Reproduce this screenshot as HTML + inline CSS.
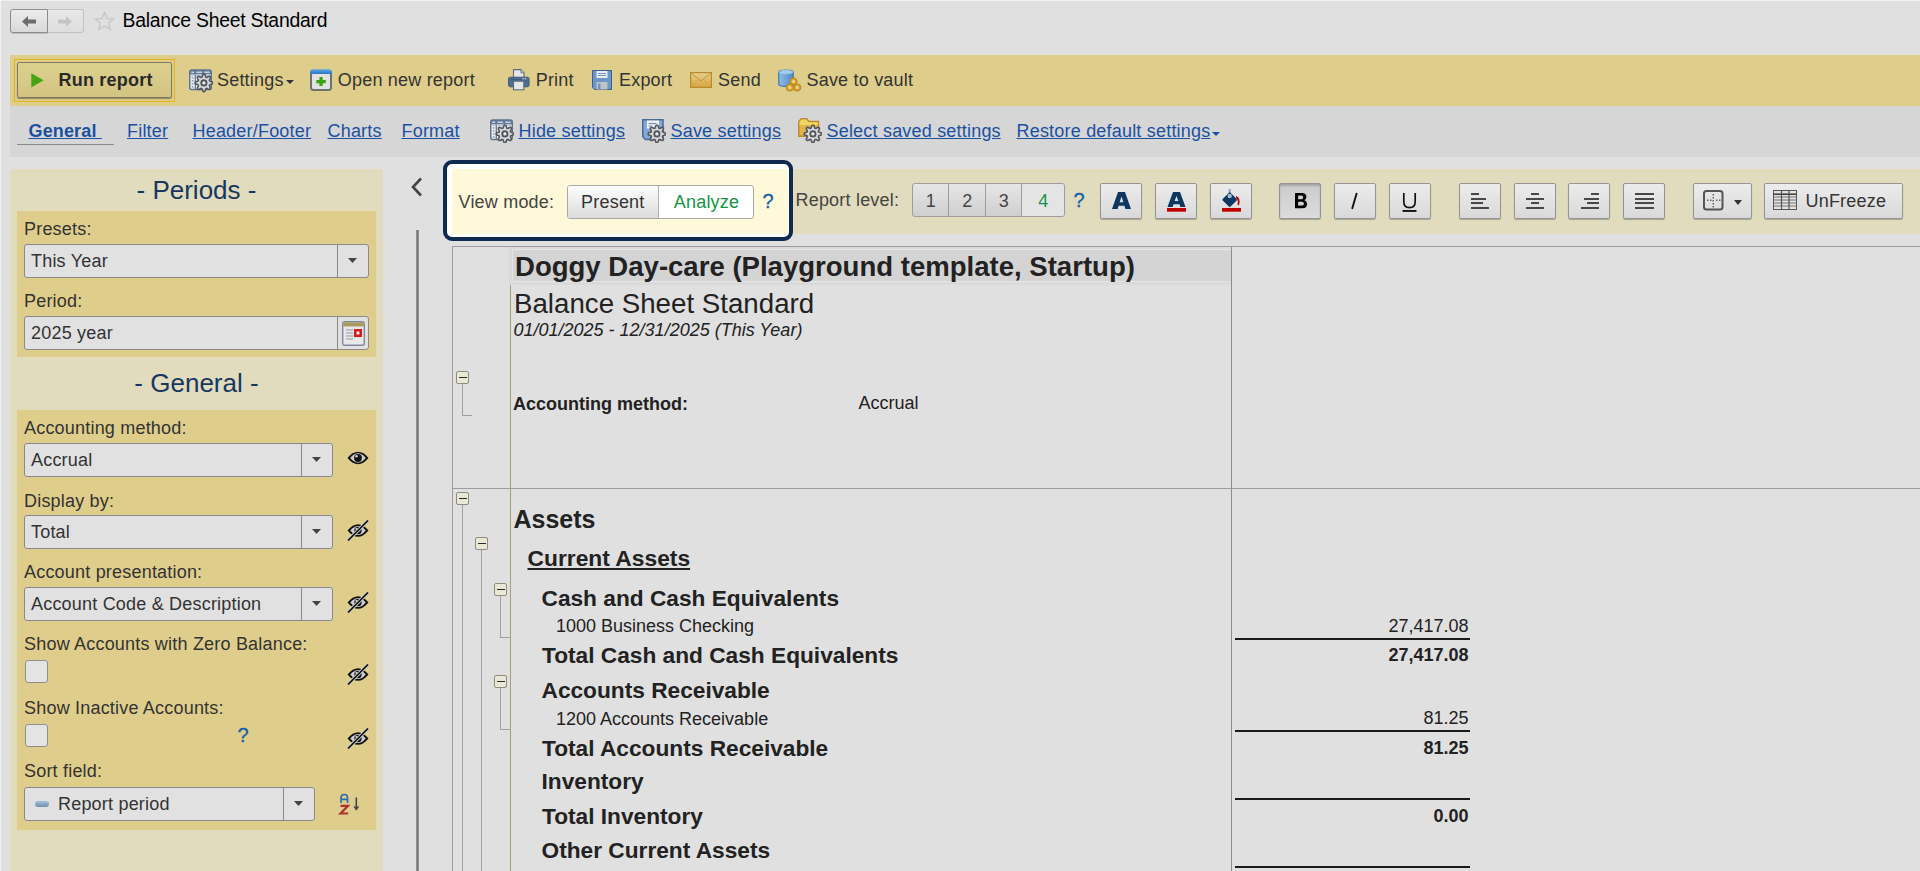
<!DOCTYPE html>
<html><head><meta charset="utf-8"><title>Balance Sheet Standard</title>
<style>
html,body{margin:0;padding:0;width:1920px;height:871px;overflow:hidden;background:#e0e0e0;font-family:"Liberation Sans",sans-serif;position:relative}
.t{position:absolute;white-space:nowrap}
.r{position:absolute}
</style></head><body>
<div class="r" style="left:0px;top:0px;width:1920px;height:1px;background:#f2f2f2"></div>
<div class="r" style="left:0px;top:0px;width:1px;height:871px;background:#f2f2f2"></div>
<div class="r" style="left:10px;top:9px;width:38px;height:24px;border:1px solid #8c8c8c;border-radius:3px 0 0 3px;background:linear-gradient(#ececec,#d9d9d9);box-sizing:border-box;box-shadow:0 1px 0 #bdbdbd"></div>
<div class="r" style="left:48px;top:9px;width:36px;height:24px;border:1px solid #c2c2c2;border-left:none;border-radius:0 3px 3px 0;background:linear-gradient(#e8e8e8,#dedede);box-sizing:border-box"></div>
<svg class="r" style="left:22px;top:16px" width="14" height="11" viewBox="0 0 14 11"><path d="M0 5.5 L6 0 V3.6 H14 V7.4 H6 V11 Z" fill="#6b6b6b"/></svg>
<svg class="r" style="left:58px;top:16px" width="14" height="11" viewBox="0 0 14 11"><path d="M14 5.5 L8 0 V3.6 H0 V7.4 H8 V11 Z" fill="#c4c4c4"/></svg>
<svg class="r" style="left:94px;top:11px" width="21" height="20" viewBox="0 0 21 20"><path d="M10.5 1.5 L13.2 7.6 L19.6 8 L14.7 12.2 L16.3 18.5 L10.5 15 L4.7 18.5 L6.3 12.2 L1.4 8 L7.8 7.6 Z" fill="none" stroke="#c6c6c6" stroke-width="1.3"/></svg>
<div class="t" style="left:122.5px;top:10.98px;font-size:19.4px;line-height:19.4px;color:#000;font-weight:400;font-style:normal;letter-spacing:-0.25px;">Balance Sheet Standard</div>
<div class="r" style="left:10px;top:55px;width:1910px;height:51px;background:#dfce8b"></div>
<div class="r" style="left:14px;top:59px;width:161px;height:43px;border:1px solid #e3b31a;box-sizing:border-box"></div>
<div class="r" style="left:17px;top:62px;width:155px;height:36px;border:1px solid #7f7b5e;border-radius:2px;box-sizing:border-box;background:linear-gradient(#ddd08f,#d3c483);box-shadow:0 1px 1px rgba(0,0,0,.35)"></div>
<svg class="r" style="left:31px;top:73px" width="13" height="15" viewBox="0 0 13 15"><path d="M0.3 0.3 L12.6 7.3 L0.3 14.5 Z" fill="#43a516"/></svg>
<div class="t" style="left:58.5px;top:71.06px;font-size:18px;line-height:18px;color:#2a2a2a;font-weight:700;font-style:normal;letter-spacing:0.22px;">Run report</div>
<svg class="r" style="left:189px;top:69px" width="24" height="24" viewBox="0 0 24 24"><rect x="0.75" y="1" width="21.5" height="19.5" rx="2" fill="#eef0f3" stroke="#5f7594" stroke-width="1.5"/><rect x="0.75" y="1" width="21.5" height="4.2" rx="1.5" fill="#5f7594"/><rect x="2.2" y="2.6" width="3.2" height="1.2" fill="#e8ecf0"/><rect x="7.4" y="2.6" width="5.8" height="1.2" fill="#e8ecf0"/><rect x="15.2" y="2.6" width="5.5" height="1.2" fill="#e8ecf0"/><line x1="6.3" y1="1" x2="6.3" y2="20.5" stroke="#5f7594" stroke-width="1.3"/><line x1="14.4" y1="5" x2="14.4" y2="20.5" stroke="#a3b1c4" stroke-width="1"/><line x1="1" y1="6.2" x2="22" y2="6.2" stroke="#a3b1c4" stroke-width="1"/><rect x="2.8" y="8.2" width="1.6" height="1.4" fill="#8090a8"/><rect x="2.8" y="11.2" width="1.6" height="1.4" fill="#8090a8"/><rect x="2.8" y="14.2" width="1.6" height="1.4" fill="#8090a8"/><rect x="2.8" y="17.2" width="1.6" height="1.4" fill="#8090a8"/><polygon points="23.60,13.90 23.58,14.47 23.04,14.97 22.15,15.34 21.26,15.60 20.67,15.86 20.53,16.23 20.36,16.59 20.60,17.19 21.05,18.01 21.41,18.90 21.44,19.64 21.05,20.05 20.64,20.44 19.90,20.41 19.01,20.05 18.19,19.60 17.59,19.36 17.23,19.53 16.86,19.67 16.60,20.26 16.34,21.15 15.97,22.04 15.47,22.58 14.90,22.60 14.33,22.58 13.83,22.04 13.46,21.15 13.20,20.26 12.94,19.67 12.57,19.53 12.21,19.36 11.61,19.60 10.79,20.05 9.90,20.41 9.16,20.44 8.75,20.05 8.36,19.64 8.39,18.90 8.75,18.01 9.20,17.19 9.44,16.59 9.27,16.23 9.13,15.86 8.54,15.60 7.65,15.34 6.76,14.97 6.22,14.47 6.20,13.90 6.22,13.33 6.76,12.83 7.65,12.46 8.54,12.20 9.13,11.94 9.27,11.57 9.44,11.21 9.20,10.61 8.75,9.79 8.39,8.90 8.36,8.16 8.75,7.75 9.16,7.36 9.90,7.39 10.79,7.75 11.61,8.20 12.21,8.44 12.57,8.27 12.94,8.13 13.20,7.54 13.46,6.65 13.83,5.76 14.33,5.22 14.90,5.20 15.47,5.22 15.97,5.76 16.34,6.65 16.60,7.54 16.86,8.13 17.23,8.27 17.59,8.44 18.19,8.20 19.01,7.75 19.90,7.39 20.64,7.36 21.05,7.75 21.44,8.16 21.41,8.90 21.05,9.79 20.60,10.61 20.36,11.21 20.53,11.57 20.67,11.94 21.26,12.20 22.15,12.46 23.04,12.83 23.58,13.33" fill="#dadada" stroke="#50555e" stroke-width="1.6" stroke-linejoin="round"/><circle cx="14.9" cy="13.9" r="2.61" fill="#eee" stroke="#50555e" stroke-width="1.9"/></svg>
<div class="t" style="left:217px;top:70.56px;font-size:18px;line-height:18px;color:#333;font-weight:400;font-style:normal;letter-spacing:0.2px;">Settings</div>
<svg class="r" style="left:286px;top:80px" width="8" height="4" viewBox="0 0 8 4"><path d="M0 0 H8 L4 4 Z" fill="#333"/></svg>
<svg class="r" style="left:310px;top:69px" width="22" height="22" viewBox="0 0 22 22"><defs><linearGradient id="onr" x1="0" y1="0" x2="0" y2="1"><stop offset="0" stop-color="#62a6e2"/><stop offset="1" stop-color="#2a76c6"/></linearGradient></defs><rect x="1" y="3" width="20" height="18" rx="2.5" fill="#e2e2e2" stroke="#6c736c" stroke-width="2"/><path d="M0 3.2 Q0 0.2 3.2 0.2 H18.8 Q22 0.2 22 3.2 V5 H0 Z" fill="url(#onr)"/><path d="M9.4 8.1 H12.7 V11 H15.8 V14.2 H12.7 V17 H9.4 V14.2 H6.3 V11 H9.4 Z" fill="#3aa214"/></svg>
<div class="t" style="left:337.8px;top:70.56px;font-size:18px;line-height:18px;color:#333;font-weight:400;font-style:normal;letter-spacing:0.2px;">Open new report</div>
<svg class="r" style="left:507px;top:69px" width="23" height="22" viewBox="0 0 23 22"><path d="M6.5 0.6 H13.8 L17 3.8 V9 H6.5 Z" fill="#e6e6e6" stroke="#5c6b7c" stroke-width="1.1"/><path d="M13.8 0.6 V3.8 H17" fill="#d0d0d0" stroke="#5c6b7c" stroke-width="0.8"/><rect x="1.5" y="8.2" width="20.6" height="9.6" rx="1.8" fill="#4d6e94" stroke="#3a5678" stroke-width="0.9"/><line x1="3.5" y1="10.6" x2="19.5" y2="10.6" stroke="#3a5678" stroke-width="0.8"/><rect x="15.5" y="9.2" width="1.3" height="1.2" fill="#e8e8e8"/><rect x="17.8" y="9.2" width="1.3" height="1.2" fill="#e8e8e8"/><rect x="6.5" y="12.2" width="10.3" height="8.6" fill="#e6e6e6" stroke="#5c6b7c" stroke-width="1.1"/></svg>
<div class="t" style="left:535.7px;top:70.56px;font-size:18px;line-height:18px;color:#333;font-weight:400;font-style:normal;letter-spacing:0.2px;">Print</div>
<svg class="r" style="left:592px;top:70px" width="20" height="20" viewBox="0 0 20 20"><path d="M0.5 0.5 H19.5 V19.5 H2.5 L0.5 17.5 Z" fill="#6d95c7" stroke="#3f5f8a" stroke-width="1"/><rect x="4.5" y="1" width="11" height="7" fill="#ececec"/><line x1="6" y1="3.5" x2="14" y2="3.5" stroke="#6d95c7"/><line x1="6" y1="5.5" x2="14" y2="5.5" stroke="#6d95c7"/><rect x="4.5" y="12" width="11" height="7.5" fill="#c0c4c0"/><rect x="6" y="13.5" width="2.5" height="6" fill="#6d95c7"/></svg>
<div class="t" style="left:619px;top:70.56px;font-size:18px;line-height:18px;color:#333;font-weight:400;font-style:normal;letter-spacing:0.2px;">Export</div>
<svg class="r" style="left:690px;top:72px" width="22" height="16" viewBox="0 0 22 16"><defs><linearGradient id="env" x1="0" y1="0" x2="0" y2="1"><stop offset="0" stop-color="#e8cf90"/><stop offset="1" stop-color="#d9a53c"/></linearGradient></defs><rect x="0.6" y="0.6" width="20.8" height="14.8" fill="url(#env)" stroke="#b88a2e" stroke-width="1.2"/><path d="M1 1 L11 9 L21 1" fill="none" stroke="#c19138" stroke-width="1"/><path d="M1 15 L8 8 M21 15 L14 8" stroke="#c9a050" stroke-width="0.8"/></svg>
<div class="t" style="left:718px;top:70.56px;font-size:18px;line-height:18px;color:#333;font-weight:400;font-style:normal;letter-spacing:0.2px;">Send</div>
<svg class="r" style="left:778px;top:69px" width="24" height="23" viewBox="0 0 24 23"><defs><linearGradient id="cyl" x1="0" y1="0" x2="1" y2="0"><stop offset="0" stop-color="#8fbde6"/><stop offset="1" stop-color="#4f8cc8"/></linearGradient></defs><path d="M0.8 3 C0.8 0.5 15.2 0.5 15.2 3 V15.5 C15.2 18 0.8 18 0.8 15.5 Z" fill="url(#cyl)" stroke="#3f78a8" stroke-width="1.2"/><ellipse cx="8" cy="3" rx="7.2" ry="2.2" fill="#9fcbee"/><g fill="#d9a82a" stroke="#b7831c" stroke-width="1"><circle cx="15.5" cy="12.5" r="3.6"/><circle cx="11.8" cy="18.5" r="3.6"/><circle cx="19.2" cy="18.5" r="3.6"/></g><g fill="#f3dfa5"><rect x="14.3" y="11.3" width="2.4" height="2.4"/><rect x="10.6" y="17.3" width="2.4" height="2.4"/><rect x="18" y="17.3" width="2.4" height="2.4"/></g></svg>
<div class="t" style="left:806.5px;top:70.56px;font-size:18px;line-height:18px;color:#333;font-weight:400;font-style:normal;letter-spacing:0.2px;">Save to vault</div>
<div class="r" style="left:10px;top:106px;width:1910px;height:51px;background:#d6d6d6"></div>
<div class="t" style="left:28.5px;top:122.16px;font-size:18px;line-height:18px;color:#1a50a2;font-weight:700;font-style:normal;letter-spacing:0.15px;text-decoration:underline">General&nbsp;</div>
<div class="r" style="left:17px;top:143.6px;width:97px;height:1.5px;background:#8a8a8a"></div>
<div class="t" style="left:127px;top:122.16px;font-size:18px;line-height:18px;color:#1a50a2;font-weight:400;font-style:normal;letter-spacing:0.2px;text-decoration:underline">Filter</div>
<div class="t" style="left:192.5px;top:122.16px;font-size:18px;line-height:18px;color:#1a50a2;font-weight:400;font-style:normal;letter-spacing:0.2px;text-decoration:underline">Header/Footer</div>
<div class="t" style="left:327.5px;top:122.16px;font-size:18px;line-height:18px;color:#1a50a2;font-weight:400;font-style:normal;letter-spacing:0.2px;text-decoration:underline">Charts</div>
<div class="t" style="left:401.5px;top:122.16px;font-size:18px;line-height:18px;color:#1a50a2;font-weight:400;font-style:normal;letter-spacing:0.2px;text-decoration:underline">Format</div>
<svg class="r" style="left:490px;top:119px" width="24" height="24" viewBox="0 0 24 24"><rect x="0.75" y="1" width="21.5" height="19.5" rx="2" fill="#eef0f3" stroke="#5f7594" stroke-width="1.5"/><rect x="0.75" y="1" width="21.5" height="4.2" rx="1.5" fill="#5f7594"/><rect x="2.2" y="2.6" width="3.2" height="1.2" fill="#e8ecf0"/><rect x="7.4" y="2.6" width="5.8" height="1.2" fill="#e8ecf0"/><rect x="15.2" y="2.6" width="5.5" height="1.2" fill="#e8ecf0"/><line x1="6.3" y1="1" x2="6.3" y2="20.5" stroke="#5f7594" stroke-width="1.3"/><line x1="14.4" y1="5" x2="14.4" y2="20.5" stroke="#a3b1c4" stroke-width="1"/><line x1="1" y1="6.2" x2="22" y2="6.2" stroke="#a3b1c4" stroke-width="1"/><rect x="2.8" y="8.2" width="1.6" height="1.4" fill="#8090a8"/><rect x="2.8" y="11.2" width="1.6" height="1.4" fill="#8090a8"/><rect x="2.8" y="14.2" width="1.6" height="1.4" fill="#8090a8"/><rect x="2.8" y="17.2" width="1.6" height="1.4" fill="#8090a8"/><polygon points="23.60,14.90 23.58,15.47 23.04,15.97 22.15,16.34 21.26,16.60 20.67,16.86 20.53,17.23 20.36,17.59 20.60,18.19 21.05,19.01 21.41,19.90 21.44,20.64 21.05,21.05 20.64,21.44 19.90,21.41 19.01,21.05 18.19,20.60 17.59,20.36 17.23,20.53 16.86,20.67 16.60,21.26 16.34,22.15 15.97,23.04 15.47,23.58 14.90,23.60 14.33,23.58 13.83,23.04 13.46,22.15 13.20,21.26 12.94,20.67 12.57,20.53 12.21,20.36 11.61,20.60 10.79,21.05 9.90,21.41 9.16,21.44 8.75,21.05 8.36,20.64 8.39,19.90 8.75,19.01 9.20,18.19 9.44,17.59 9.27,17.23 9.13,16.86 8.54,16.60 7.65,16.34 6.76,15.97 6.22,15.47 6.20,14.90 6.22,14.33 6.76,13.83 7.65,13.46 8.54,13.20 9.13,12.94 9.27,12.57 9.44,12.21 9.20,11.61 8.75,10.79 8.39,9.90 8.36,9.16 8.75,8.75 9.16,8.36 9.90,8.39 10.79,8.75 11.61,9.20 12.21,9.44 12.57,9.27 12.94,9.13 13.20,8.54 13.46,7.65 13.83,6.76 14.33,6.22 14.90,6.20 15.47,6.22 15.97,6.76 16.34,7.65 16.60,8.54 16.86,9.13 17.23,9.27 17.59,9.44 18.19,9.20 19.01,8.75 19.90,8.39 20.64,8.36 21.05,8.75 21.44,9.16 21.41,9.90 21.05,10.79 20.60,11.61 20.36,12.21 20.53,12.57 20.67,12.94 21.26,13.20 22.15,13.46 23.04,13.83 23.58,14.33" fill="#dadada" stroke="#50555e" stroke-width="1.6" stroke-linejoin="round"/><circle cx="14.9" cy="14.9" r="2.61" fill="#eee" stroke="#50555e" stroke-width="1.9"/></svg>
<div class="t" style="left:518.5px;top:122.16px;font-size:18px;line-height:18px;color:#1a50a2;font-weight:400;font-style:normal;letter-spacing:0.2px;text-decoration:underline">Hide settings</div>
<svg class="r" style="left:642px;top:119px" width="24" height="24" viewBox="0 0 24 24"><path d="M0.75 0.75 H21 V20.5 H3.5 L0.75 17.8 Z" fill="#85a8d6" stroke="#4a6a95" stroke-width="1.5"/><rect x="5" y="1.5" width="12" height="8" fill="#f2f2f2"/><line x1="6.5" y1="4.5" x2="14.5" y2="4.5" stroke="#6f8fbf" stroke-width="1.2"/><line x1="6.5" y1="7" x2="10" y2="7" stroke="#6f8fbf" stroke-width="1"/><polygon points="23.60,14.90 23.58,15.47 23.04,15.97 22.15,16.34 21.26,16.60 20.67,16.86 20.53,17.23 20.36,17.59 20.60,18.19 21.05,19.01 21.41,19.90 21.44,20.64 21.05,21.05 20.64,21.44 19.90,21.41 19.01,21.05 18.19,20.60 17.59,20.36 17.23,20.53 16.86,20.67 16.60,21.26 16.34,22.15 15.97,23.04 15.47,23.58 14.90,23.60 14.33,23.58 13.83,23.04 13.46,22.15 13.20,21.26 12.94,20.67 12.57,20.53 12.21,20.36 11.61,20.60 10.79,21.05 9.90,21.41 9.16,21.44 8.75,21.05 8.36,20.64 8.39,19.90 8.75,19.01 9.20,18.19 9.44,17.59 9.27,17.23 9.13,16.86 8.54,16.60 7.65,16.34 6.76,15.97 6.22,15.47 6.20,14.90 6.22,14.33 6.76,13.83 7.65,13.46 8.54,13.20 9.13,12.94 9.27,12.57 9.44,12.21 9.20,11.61 8.75,10.79 8.39,9.90 8.36,9.16 8.75,8.75 9.16,8.36 9.90,8.39 10.79,8.75 11.61,9.20 12.21,9.44 12.57,9.27 12.94,9.13 13.20,8.54 13.46,7.65 13.83,6.76 14.33,6.22 14.90,6.20 15.47,6.22 15.97,6.76 16.34,7.65 16.60,8.54 16.86,9.13 17.23,9.27 17.59,9.44 18.19,9.20 19.01,8.75 19.90,8.39 20.64,8.36 21.05,8.75 21.44,9.16 21.41,9.90 21.05,10.79 20.60,11.61 20.36,12.21 20.53,12.57 20.67,12.94 21.26,13.20 22.15,13.46 23.04,13.83 23.58,14.33" fill="#dadada" stroke="#50555e" stroke-width="1.6" stroke-linejoin="round"/><circle cx="14.9" cy="14.9" r="2.61" fill="#eee" stroke="#50555e" stroke-width="1.9"/></svg>
<div class="t" style="left:670.5px;top:122.16px;font-size:18px;line-height:18px;color:#1a50a2;font-weight:400;font-style:normal;letter-spacing:0.2px;text-decoration:underline">Save settings</div>
<svg class="r" style="left:798px;top:118px" width="24" height="25" viewBox="0 0 24 25"><path d="M0.75 3.5 L3.2 0.75 H8.5 L11 3.5 H20.5 V18.2 H0.75 Z" fill="#e2b448" stroke="#c0862e" stroke-width="1.4"/><path d="M1.5 4 L3.5 1.5 H8.2 L10.5 4.2 H19.8 V7 H1.5 Z" fill="#f0d560"/><polygon points="23.60,15.90 23.58,16.47 23.04,16.97 22.15,17.34 21.26,17.60 20.67,17.86 20.53,18.23 20.36,18.59 20.60,19.19 21.05,20.01 21.41,20.90 21.44,21.64 21.05,22.05 20.64,22.44 19.90,22.41 19.01,22.05 18.19,21.60 17.59,21.36 17.23,21.53 16.86,21.67 16.60,22.26 16.34,23.15 15.97,24.04 15.47,24.58 14.90,24.60 14.33,24.58 13.83,24.04 13.46,23.15 13.20,22.26 12.94,21.67 12.57,21.53 12.21,21.36 11.61,21.60 10.79,22.05 9.90,22.41 9.16,22.44 8.75,22.05 8.36,21.64 8.39,20.90 8.75,20.01 9.20,19.19 9.44,18.59 9.27,18.23 9.13,17.86 8.54,17.60 7.65,17.34 6.76,16.97 6.22,16.47 6.20,15.90 6.22,15.33 6.76,14.83 7.65,14.46 8.54,14.20 9.13,13.94 9.27,13.57 9.44,13.21 9.20,12.61 8.75,11.79 8.39,10.90 8.36,10.16 8.75,9.75 9.16,9.36 9.90,9.39 10.79,9.75 11.61,10.20 12.21,10.44 12.57,10.27 12.94,10.13 13.20,9.54 13.46,8.65 13.83,7.76 14.33,7.22 14.90,7.20 15.47,7.22 15.97,7.76 16.34,8.65 16.60,9.54 16.86,10.13 17.23,10.27 17.59,10.44 18.19,10.20 19.01,9.75 19.90,9.39 20.64,9.36 21.05,9.75 21.44,10.16 21.41,10.90 21.05,11.79 20.60,12.61 20.36,13.21 20.53,13.57 20.67,13.94 21.26,14.20 22.15,14.46 23.04,14.83 23.58,15.33" fill="#dadada" stroke="#50555e" stroke-width="1.6" stroke-linejoin="round"/><circle cx="14.9" cy="15.9" r="2.61" fill="#eee" stroke="#50555e" stroke-width="1.9"/></svg>
<div class="t" style="left:826.5px;top:122.16px;font-size:18px;line-height:18px;color:#1a50a2;font-weight:400;font-style:normal;letter-spacing:0.2px;text-decoration:underline">Select saved settings</div>
<div class="t" style="left:1016.5px;top:122.16px;font-size:18px;line-height:18px;color:#1a50a2;font-weight:400;font-style:normal;letter-spacing:0.2px;text-decoration:underline">Restore default settings</div>
<svg class="r" style="left:1212px;top:132px" width="8" height="4" viewBox="0 0 8 4"><path d="M0 0 H8 L4 4 Z" fill="#1a50a2"/></svg>
<div class="r" style="left:10px;top:169px;width:373px;height:702px;background:#e0dcbd"></div>
<div class="t" style="left:10px;width:373px;text-align:center;top:177.49px;font-size:26px;line-height:26px;color:#17375e">- Periods -</div>
<div class="r" style="left:17px;top:211px;width:359px;height:146px;background:#dfce8b"></div>
<div class="t" style="left:24px;top:219.76px;font-size:18px;line-height:18px;color:#333;font-weight:400;font-style:normal;letter-spacing:0.2px;">Presets:</div>
<div class="r" style="left:24px;top:244px;width:345px;height:34px;background:#e1e1e1;border:1px solid #8a8a8a;border-radius:3px;box-sizing:border-box"></div>
<div class="r" style="left:337px;top:244px;width:1px;height:34px;background:#8a8a8a"></div>
<svg class="r" style="left:347.9px;top:257.6px" width="9" height="5" viewBox="0 0 9 5"><path d="M0 0 H9 L4.5 5 Z" fill="#444"/></svg>
<div class="t" style="left:31px;top:252.06px;font-size:18px;line-height:18px;color:#333;font-weight:400;font-style:normal;letter-spacing:0.2px;">This Year</div>
<div class="t" style="left:24px;top:291.76px;font-size:18px;line-height:18px;color:#333;font-weight:400;font-style:normal;letter-spacing:0.2px;">Period:</div>
<div class="r" style="left:24px;top:316px;width:345px;height:34px;background:#e1e1e1;border:1px solid #8a8a8a;border-radius:3px;box-sizing:border-box"></div>
<div class="r" style="left:337px;top:316px;width:1px;height:34px;background:#8a8a8a"></div>
<div class="t" style="left:31px;top:324.06px;font-size:18px;line-height:18px;color:#333;font-weight:400;font-style:normal;letter-spacing:0.2px;">2025 year</div>
<svg class="r" style="left:342px;top:321px" width="23" height="25" viewBox="0 0 23 25"><rect x="0.7" y="0.7" width="21.6" height="23.6" rx="2" fill="#e8e8e8" stroke="#7f8aa0" stroke-width="1.4"/><rect x="1.4" y="1.4" width="20.2" height="4" fill="#a99a5c"/><line x1="4" y1="9" x2="11" y2="9" stroke="#999"/><line x1="4" y1="12" x2="11" y2="12" stroke="#999"/><line x1="4" y1="15" x2="11" y2="15" stroke="#999"/><line x1="4" y1="18" x2="11" y2="18" stroke="#999"/><rect x="12" y="8" width="8" height="8" fill="#d21a1a"/><rect x="14.5" y="10.5" width="3" height="3" fill="#eee"/></svg>
<div class="t" style="left:10px;width:373px;text-align:center;top:369.99px;font-size:26px;line-height:26px;color:#17375e">- General -</div>
<div class="r" style="left:17px;top:410px;width:359px;height:420px;background:#dfce8b"></div>
<div class="t" style="left:24px;top:419.26px;font-size:18px;line-height:18px;color:#333;font-weight:400;font-style:normal;letter-spacing:0.2px;">Accounting method:</div>
<div class="r" style="left:24px;top:443px;width:309px;height:34px;background:#e1e1e1;border:1px solid #8a8a8a;border-radius:3px;box-sizing:border-box"></div>
<div class="r" style="left:301px;top:443px;width:1px;height:34px;background:#8a8a8a"></div>
<svg class="r" style="left:311.9px;top:456.6px" width="9" height="5" viewBox="0 0 9 5"><path d="M0 0 H9 L4.5 5 Z" fill="#444"/></svg>
<div class="t" style="left:31px;top:451.06px;font-size:18px;line-height:18px;color:#333;font-weight:400;font-style:normal;letter-spacing:0.2px;">Accrual</div>
<svg class="r" style="left:347px;top:451px" width="22" height="14" viewBox="0 0 22 14"><path d="M0.5 7 Q11 -5.5 21.5 7 Q11 19.5 0.5 7 Z" fill="#111"/><path d="M3.2 7 Q11 -2.3 18.8 7 Q11 16.3 3.2 7 Z" fill="#cfcfcf"/><circle cx="11" cy="7" r="3.9" fill="#111"/><circle cx="9.5" cy="5.3" r="1.2" fill="#d5d5d5"/></svg>
<div class="t" style="left:24px;top:491.56px;font-size:18px;line-height:18px;color:#333;font-weight:400;font-style:normal;letter-spacing:0.2px;">Display by:</div>
<div class="r" style="left:24px;top:515px;width:309px;height:34px;background:#e1e1e1;border:1px solid #8a8a8a;border-radius:3px;box-sizing:border-box"></div>
<div class="r" style="left:301px;top:515px;width:1px;height:34px;background:#8a8a8a"></div>
<svg class="r" style="left:311.9px;top:528.6px" width="9" height="5" viewBox="0 0 9 5"><path d="M0 0 H9 L4.5 5 Z" fill="#444"/></svg>
<div class="t" style="left:31px;top:523.06px;font-size:18px;line-height:18px;color:#333;font-weight:400;font-style:normal;letter-spacing:0.2px;">Total</div>
<svg class="r" style="left:347px;top:520px" width="22" height="21" viewBox="0 0 22 21"><path d="M0.5 10.5 Q11 -2.2 21.5 10.5 Q11 23.2 0.5 10.5 Z" fill="#111"/><path d="M3.2 10.5 Q11 1.3 18.8 10.5 Q11 19.7 3.2 10.5 Z" fill="#cfcfcf"/><circle cx="11" cy="10.5" r="3.7" fill="#111"/><circle cx="9.5" cy="8.9" r="1.1" fill="#d5d5d5"/><line x1="1" y1="20.5" x2="21" y2="0.5" stroke="#cfcfcf" stroke-width="3.4"/><line x1="1" y1="20.5" x2="21" y2="0.5" stroke="#111" stroke-width="1.7"/></svg>
<div class="t" style="left:24px;top:563.36px;font-size:18px;line-height:18px;color:#333;font-weight:400;font-style:normal;letter-spacing:0.2px;">Account presentation:</div>
<div class="r" style="left:24px;top:587px;width:309px;height:34px;background:#e1e1e1;border:1px solid #8a8a8a;border-radius:3px;box-sizing:border-box"></div>
<div class="r" style="left:301px;top:587px;width:1px;height:34px;background:#8a8a8a"></div>
<svg class="r" style="left:311.9px;top:600.6px" width="9" height="5" viewBox="0 0 9 5"><path d="M0 0 H9 L4.5 5 Z" fill="#444"/></svg>
<div class="t" style="left:31px;top:595.06px;font-size:18px;line-height:18px;color:#333;font-weight:400;font-style:normal;letter-spacing:0.2px;">Account Code &amp; Description</div>
<svg class="r" style="left:347px;top:592px" width="22" height="21" viewBox="0 0 22 21"><path d="M0.5 10.5 Q11 -2.2 21.5 10.5 Q11 23.2 0.5 10.5 Z" fill="#111"/><path d="M3.2 10.5 Q11 1.3 18.8 10.5 Q11 19.7 3.2 10.5 Z" fill="#cfcfcf"/><circle cx="11" cy="10.5" r="3.7" fill="#111"/><circle cx="9.5" cy="8.9" r="1.1" fill="#d5d5d5"/><line x1="1" y1="20.5" x2="21" y2="0.5" stroke="#cfcfcf" stroke-width="3.4"/><line x1="1" y1="20.5" x2="21" y2="0.5" stroke="#111" stroke-width="1.7"/></svg>
<div class="t" style="left:24px;top:635.16px;font-size:18px;line-height:18px;color:#333;font-weight:400;font-style:normal;letter-spacing:0.2px;">Show Accounts with Zero Balance:</div>
<div class="r" style="left:25px;top:660px;width:23px;height:23px;background:#e4e4e4;border:1px solid #8f8f8f;border-radius:3px;box-sizing:border-box"></div>
<svg class="r" style="left:347px;top:664px" width="22" height="21" viewBox="0 0 22 21"><path d="M0.5 10.5 Q11 -2.2 21.5 10.5 Q11 23.2 0.5 10.5 Z" fill="#111"/><path d="M3.2 10.5 Q11 1.3 18.8 10.5 Q11 19.7 3.2 10.5 Z" fill="#cfcfcf"/><circle cx="11" cy="10.5" r="3.7" fill="#111"/><circle cx="9.5" cy="8.9" r="1.1" fill="#d5d5d5"/><line x1="1" y1="20.5" x2="21" y2="0.5" stroke="#cfcfcf" stroke-width="3.4"/><line x1="1" y1="20.5" x2="21" y2="0.5" stroke="#111" stroke-width="1.7"/></svg>
<div class="t" style="left:24px;top:698.56px;font-size:18px;line-height:18px;color:#333;font-weight:400;font-style:normal;letter-spacing:0.2px;">Show Inactive Accounts:</div>
<div class="r" style="left:25px;top:724px;width:23px;height:23px;background:#e4e4e4;border:1px solid #8f8f8f;border-radius:3px;box-sizing:border-box"></div>
<div class="t" style="left:237.5px;top:725.27px;font-size:20px;line-height:20px;color:#1360aa;font-weight:400;font-style:normal;-webkit-text-stroke:0.3px #1360aa">?</div>
<svg class="r" style="left:347px;top:728px" width="22" height="21" viewBox="0 0 22 21"><path d="M0.5 10.5 Q11 -2.2 21.5 10.5 Q11 23.2 0.5 10.5 Z" fill="#111"/><path d="M3.2 10.5 Q11 1.3 18.8 10.5 Q11 19.7 3.2 10.5 Z" fill="#cfcfcf"/><circle cx="11" cy="10.5" r="3.7" fill="#111"/><circle cx="9.5" cy="8.9" r="1.1" fill="#d5d5d5"/><line x1="1" y1="20.5" x2="21" y2="0.5" stroke="#cfcfcf" stroke-width="3.4"/><line x1="1" y1="20.5" x2="21" y2="0.5" stroke="#111" stroke-width="1.7"/></svg>
<div class="t" style="left:24px;top:762.46px;font-size:18px;line-height:18px;color:#333;font-weight:400;font-style:normal;letter-spacing:0.2px;">Sort field:</div>
<div class="r" style="left:24px;top:787px;width:291px;height:34px;background:#e1e1e1;border:1px solid #8a8a8a;border-radius:3px;box-sizing:border-box"></div>
<div class="r" style="left:283px;top:787px;width:1px;height:34px;background:#8a8a8a"></div>
<svg class="r" style="left:293.9px;top:800.6px" width="9" height="5" viewBox="0 0 9 5"><path d="M0 0 H9 L4.5 5 Z" fill="#444"/></svg>
<div class="t" style="left:58px;top:794.96px;font-size:18px;line-height:18px;color:#333;font-weight:400;font-style:normal;letter-spacing:0.2px;">Report period</div>
<div class="r" style="left:35px;top:801px;width:14px;height:6px;background:linear-gradient(#a9bfd6,#6f8fb0);border-radius:3px"></div>
<svg class="r" style="left:338px;top:793px" width="24" height="23" viewBox="0 0 24 23"><path d="M3 10 V5 Q3 1.5 6.3 1.5 Q9.5 1.5 9.5 5 V10 M3 6.3 H9.5" fill="none" stroke="#2a6db0" stroke-width="1.7"/><path d="M2.5 12.8 H10 L2.5 20.5 H10.2" fill="none" stroke="#b03030" stroke-width="2.2"/><path d="M18.3 4.5 V16.5" stroke="#444" stroke-width="1.6"/><path d="M15.3 13.5 L18.3 17.5 L21.3 13.5 Z" fill="#444"/></svg>
<svg class="r" style="left:410px;top:177px" width="14" height="20" viewBox="0 0 14 20"><path d="M11 1.5 L3 10 L11 18.5" fill="none" stroke="#444" stroke-width="2.6"/></svg>
<div class="r" style="left:416px;top:230px;width:3px;height:641px;background:linear-gradient(90deg,#9a9a9a,#7a7a7a 50%,#9a9a9a)"></div>
<div class="r" style="left:443px;top:169px;width:1477px;height:65px;background:#e0dcbd"></div>
<div class="r" style="left:443px;top:160px;width:350px;height:81px;border:4px solid #0e2a50;border-radius:9px;background:#fff;box-sizing:border-box"></div>
<div class="r" style="left:452px;top:169px;width:336px;height:65px;background:#fff8d9"></div>
<div class="t" style="left:458.5px;top:192.76px;font-size:18px;line-height:18px;color:#444;font-weight:400;font-style:normal;letter-spacing:0.2px;">View mode:</div>
<div class="r" style="left:567px;top:185px;width:187px;height:34px;border:1px solid #a9a9a9;border-radius:3px;box-sizing:border-box;background:#fff"></div>
<div class="r" style="left:568px;top:186px;width:90px;height:32px;background:linear-gradient(#fdfdfd,#dcdcdc);border-radius:2px 0 0 2px"></div>
<div class="r" style="left:658px;top:186px;width:1px;height:32px;background:#b0b0b0"></div>
<div class="t" style="left:581.1px;top:192.76px;font-size:18px;line-height:18px;color:#333;font-weight:400;font-style:normal;letter-spacing:0.2px;">Present</div>
<div class="t" style="left:673.8px;top:192.76px;font-size:18px;line-height:18px;color:#159447;font-weight:400;font-style:normal;letter-spacing:0.2px;">Analyze</div>
<div class="t" style="left:762.5px;top:191.07px;font-size:20px;line-height:20px;color:#1360aa;font-weight:400;font-style:normal;-webkit-text-stroke:0.3px #1360aa">?</div>
<div class="t" style="left:795.5px;top:191.26px;font-size:18px;line-height:18px;color:#444;font-weight:400;font-style:normal;letter-spacing:0.2px;">Report level:</div>
<div class="r" style="left:912px;top:183px;width:153px;height:34px;border:1px solid #9d9d9d;border-radius:3px;box-sizing:border-box;background:linear-gradient(#e6e6e6,#cfcfcf)"></div>
<div class="r" style="left:1022px;top:184px;width:42px;height:32px;background:#e4e4e4;border-radius:0 2px 2px 0"></div>
<div class="r" style="left:948px;top:184px;width:1px;height:32px;background:#9d9d9d"></div>
<div class="r" style="left:985px;top:184px;width:1px;height:32px;background:#9d9d9d"></div>
<div class="r" style="left:1021px;top:184px;width:1px;height:32px;background:#9d9d9d"></div>
<div class="t" style="left:925.7px;top:191.56px;font-size:18px;line-height:18px;color:#444;font-weight:400;font-style:normal;">1</div>
<div class="t" style="left:962.2px;top:191.56px;font-size:18px;line-height:18px;color:#444;font-weight:400;font-style:normal;">2</div>
<div class="t" style="left:998.7px;top:191.56px;font-size:18px;line-height:18px;color:#444;font-weight:400;font-style:normal;">3</div>
<div class="t" style="left:1038.2px;top:191.56px;font-size:18px;line-height:18px;color:#159447;font-weight:400;font-style:normal;">4</div>
<div class="t" style="left:1073.5px;top:189.77px;font-size:20px;line-height:20px;color:#1360aa;font-weight:400;font-style:normal;-webkit-text-stroke:0.3px #1360aa">?</div>
<div class="r" style="left:1100px;top:183px;width:42px;height:36px;border:1px solid #959595;border-radius:2px;box-sizing:border-box;background:linear-gradient(#ececec,#d9d9d9);box-shadow:0 1px 1px rgba(0,0,0,.25)"></div>
<div class="r" style="left:1155px;top:183px;width:42px;height:36px;border:1px solid #959595;border-radius:2px;box-sizing:border-box;background:linear-gradient(#ececec,#d9d9d9);box-shadow:0 1px 1px rgba(0,0,0,.25)"></div>
<div class="r" style="left:1210px;top:183px;width:42px;height:36px;border:1px solid #959595;border-radius:2px;box-sizing:border-box;background:linear-gradient(#ececec,#d9d9d9);box-shadow:0 1px 1px rgba(0,0,0,.25)"></div>
<svg class="r" style="left:1112px;top:192px" width="19" height="17" viewBox="0 0 19 17"><path d="M0 17 L6 0 H13 L19 17 H13.4 L12.4 13.8 H6.6 L5.6 17 Z M7.6 10.3 H11.4 L9.5 4.6 Z" fill="#0d3760" fill-rule="evenodd"/></svg>
<svg class="r" style="left:1167px;top:192px" width="19" height="20" viewBox="0 0 19 20"><path d="M0.5 15 L6 0 H13 L18.5 15 H13.4 L12.5 12.3 H6.5 L5.6 15 Z M7.6 9 H11.4 L9.5 4 Z" fill="#0d3760" fill-rule="evenodd"/><rect x="0" y="16" width="19" height="3.7" fill="#c00000"/></svg>
<svg class="r" style="left:1221px;top:189px" width="21" height="23" viewBox="0 0 21 23"><rect x="7.8" y="0" width="1.8" height="8" fill="#7f9bb8"/><path d="M8.7 3 L15.7 10 Q16.5 10.8 15.7 11.6 L9.5 17.6 Q8.7 18.4 7.9 17.6 L1.7 11.6 Q0.9 10.8 1.7 10 Z" fill="#0d3760"/><circle cx="8.7" cy="7" r="2.2" fill="#a8bdd2"/><path d="M15 6.8 Q20.3 9 18 16.5 L16.5 15.5 Q17.5 10.5 15 9 Z" fill="#c00000"/><rect x="1" y="19" width="19" height="3.7" fill="#c00000"/></svg>
<div class="r" style="left:1279px;top:183px;width:42px;height:36px;border:1px solid #959595;border-radius:2px;box-sizing:border-box;background:linear-gradient(#cbcbcb,#dcdcdc);box-shadow:inset 0 2px 2px rgba(0,0,0,.18),0 1px 1px rgba(0,0,0,.25)"></div>
<div class="r" style="left:1334px;top:183px;width:42px;height:36px;border:1px solid #959595;border-radius:2px;box-sizing:border-box;background:linear-gradient(#ececec,#d9d9d9);box-shadow:0 1px 1px rgba(0,0,0,.25)"></div>
<div class="r" style="left:1389px;top:183px;width:42px;height:36px;border:1px solid #959595;border-radius:2px;box-sizing:border-box;background:linear-gradient(#ececec,#d9d9d9);box-shadow:0 1px 1px rgba(0,0,0,.25)"></div>
<svg class="r" style="left:1295px;top:193px" width="12" height="16" viewBox="0 0 12 16"><path d="M0 0 H6.8 Q11.4 0 11.4 3.9 Q11.4 6.4 9.2 7.3 Q12 8.2 12 11.2 Q12 15.2 7.2 15.2 H0 Z M3.2 2.6 V6.2 H6.4 Q8.2 6.2 8.2 4.4 Q8.2 2.6 6.4 2.6 Z M3.2 8.7 V12.6 H6.9 Q8.9 12.6 8.9 10.65 Q8.9 8.7 6.9 8.7 Z" fill="#000" fill-rule="evenodd"/></svg>
<svg class="r" style="left:1350px;top:192px" width="9" height="18" viewBox="0 0 9 18"><path d="M6.6 1.6 L2.3 16.2" stroke="#111" stroke-width="1.9" stroke-linecap="round"/></svg>
<svg class="r" style="left:1401px;top:192px" width="17" height="21" viewBox="0 0 17 21"><path d="M2.8 1 V9.5 Q2.8 15.7 8.5 15.7 Q14.2 15.7 14.2 9.5 V1" fill="none" stroke="#111" stroke-width="1.7"/><rect x="1.5" y="18" width="14" height="1.9" fill="#111"/></svg>
<div class="r" style="left:1459px;top:183px;width:42px;height:36px;border:1px solid #959595;border-radius:2px;box-sizing:border-box;background:linear-gradient(#ececec,#d9d9d9);box-shadow:0 1px 1px rgba(0,0,0,.25)"></div>
<div class="r" style="left:1471px;top:193px;width:8px;height:2px;background:#484848"></div>
<div class="r" style="left:1471px;top:198px;width:15px;height:2px;background:#484848"></div>
<div class="r" style="left:1471px;top:202px;width:12px;height:2px;background:#484848"></div>
<div class="r" style="left:1471px;top:207px;width:18px;height:2px;background:#484848"></div>
<div class="r" style="left:1514px;top:183px;width:42px;height:36px;border:1px solid #959595;border-radius:2px;box-sizing:border-box;background:linear-gradient(#ececec,#d9d9d9);box-shadow:0 1px 1px rgba(0,0,0,.25)"></div>
<div class="r" style="left:1531px;top:193px;width:8px;height:2px;background:#484848"></div>
<div class="r" style="left:1526px;top:198px;width:18px;height:2px;background:#484848"></div>
<div class="r" style="left:1531px;top:202px;width:8px;height:2px;background:#484848"></div>
<div class="r" style="left:1526px;top:207px;width:18px;height:2px;background:#484848"></div>
<div class="r" style="left:1568px;top:183px;width:42px;height:36px;border:1px solid #959595;border-radius:2px;box-sizing:border-box;background:linear-gradient(#ececec,#d9d9d9);box-shadow:0 1px 1px rgba(0,0,0,.25)"></div>
<div class="r" style="left:1591px;top:193px;width:8px;height:2px;background:#484848"></div>
<div class="r" style="left:1584px;top:198px;width:15px;height:2px;background:#484848"></div>
<div class="r" style="left:1587px;top:202px;width:12px;height:2px;background:#484848"></div>
<div class="r" style="left:1581px;top:207px;width:18px;height:2px;background:#484848"></div>
<div class="r" style="left:1623px;top:183px;width:42px;height:36px;border:1px solid #959595;border-radius:2px;box-sizing:border-box;background:linear-gradient(#ececec,#d9d9d9);box-shadow:0 1px 1px rgba(0,0,0,.25)"></div>
<div class="r" style="left:1635px;top:193px;width:19px;height:2px;background:#484848"></div>
<div class="r" style="left:1635px;top:198px;width:19px;height:2px;background:#484848"></div>
<div class="r" style="left:1635px;top:202px;width:19px;height:2px;background:#484848"></div>
<div class="r" style="left:1635px;top:207px;width:19px;height:2px;background:#484848"></div>
<div class="r" style="left:1693px;top:183px;width:59px;height:36px;border:1px solid #959595;border-radius:2px;box-sizing:border-box;background:linear-gradient(#ececec,#d9d9d9);box-shadow:0 1px 1px rgba(0,0,0,.25)"></div>
<svg class="r" style="left:1703px;top:190px" width="21" height="21" viewBox="0 0 21 21"><rect x="1" y="1" width="18.5" height="18.5" rx="2.5" fill="none" stroke="#555" stroke-width="2"/><rect x="9.5" y="4" width="1.5" height="1.5" fill="#666"/><rect x="9.5" y="7" width="1.5" height="1.5" fill="#666"/><rect x="9.5" y="10" width="1.5" height="1.5" fill="#666"/><rect x="9.5" y="13" width="1.5" height="1.5" fill="#666"/><rect x="9.5" y="16" width="1.5" height="1.5" fill="#666"/><rect x="4" y="9.5" width="1.5" height="1.5" fill="#666"/><rect x="7" y="9.5" width="1.5" height="1.5" fill="#666"/><rect x="13" y="9.5" width="1.5" height="1.5" fill="#666"/><rect x="16" y="9.5" width="1.5" height="1.5" fill="#666"/></svg>
<svg class="r" style="left:1734px;top:200px" width="8" height="5" viewBox="0 0 8 5"><path d="M0 0 H8 L4 5 Z" fill="#333"/></svg>
<div class="r" style="left:1764px;top:183px;width:139px;height:36px;border:1px solid #959595;border-radius:2px;box-sizing:border-box;background:linear-gradient(#ececec,#d9d9d9);box-shadow:0 1px 1px rgba(0,0,0,.25)"></div>
<svg class="r" style="left:1773px;top:190px" width="24" height="20" viewBox="0 0 24 20"><rect x="0.5" y="0.5" width="23" height="19" fill="#e2e2e2" stroke="#555"/><line x1="0.5" y1="7" x2="23.5" y2="7" stroke="#666" stroke-width="0.9"/><line x1="0.5" y1="10" x2="23.5" y2="10" stroke="#666" stroke-width="0.9"/><line x1="0.5" y1="13" x2="23.5" y2="13" stroke="#666" stroke-width="0.9"/><line x1="0.5" y1="16" x2="23.5" y2="16" stroke="#666" stroke-width="0.9"/><line x1="0.5" y1="4.2" x2="23.5" y2="4.2" stroke="#444" stroke-width="1.6"/><line x1="8.5" y1="0.5" x2="8.5" y2="19.5" stroke="#555" stroke-width="1.2"/><line x1="16" y1="0.5" x2="16" y2="19.5" stroke="#555" stroke-width="1.2"/></svg>
<div class="t" style="left:1805.5px;top:191.96px;font-size:18px;line-height:18px;color:#333;font-weight:400;font-style:normal;letter-spacing:0.2px;">UnFreeze</div>
<div class="r" style="left:452px;top:246px;width:1468px;height:625px;border-left:1px solid #9c9c9c;border-top:1px solid #9c9c9c;box-sizing:border-box"></div>
<div class="r" style="left:510px;top:285px;width:1px;height:203px;background:#a59f7c"></div>
<div class="r" style="left:510px;top:488px;width:1px;height:383px;background:#a59f7c"></div>
<div class="r" style="left:453px;top:488px;width:1467px;height:1px;background:#9c9c9c"></div>
<div class="r" style="left:509px;top:247px;width:722px;height:38px;background:#dadada"></div>
<div class="r" style="left:512px;top:249px;width:719px;height:33px;background:#e5e5e5"></div>
<div class="r" style="left:513px;top:250px;width:718px;height:31px;background:#d4d4d4"></div>
<div class="r" style="left:1231px;top:247px;width:1px;height:624px;background:#8c8c8c"></div>
<div class="t" style="left:515px;top:252.68px;font-size:27.55px;line-height:27.55px;color:#222;font-weight:700;font-style:normal;">Doggy Day-care (Playground template, Startup)</div>
<div class="t" style="left:514px;top:289.55px;font-size:27.7px;line-height:27.7px;color:#222;font-weight:400;font-style:normal;">Balance Sheet Standard</div>
<div class="t" style="left:513.5px;top:321.36px;font-size:18px;line-height:18px;color:#222;font-weight:400;font-style:italic;">01/01/2025 - 12/31/2025 (This Year)</div>
<div class="t" style="left:513px;top:394.96px;font-size:18px;line-height:18px;color:#222;font-weight:700;font-style:normal;">Accounting method:</div>
<div class="t" style="left:858.5px;top:393.76px;font-size:18px;line-height:18px;color:#222;font-weight:400;font-style:normal;">Accrual</div>
<div class="r" style="left:456px;top:371px;width:13px;height:13px;background:#e9e7d5;border:1px solid #8f8d78;box-sizing:border-box;border-radius:2px"></div>
<div class="r" style="left:458.5px;top:376.5px;width:8px;height:1.8px;background:#2a2a2a"></div>
<div class="r" style="left:462px;top:384px;width:1px;height:32px;background:#a0a0a0"></div>
<div class="r" style="left:462px;top:415px;width:10px;height:1px;background:#a0a0a0"></div>
<div class="r" style="left:456px;top:492px;width:13px;height:13px;background:#e9e7d5;border:1px solid #8f8d78;box-sizing:border-box;border-radius:2px"></div>
<div class="r" style="left:458.5px;top:497.5px;width:8px;height:1.8px;background:#2a2a2a"></div>
<div class="r" style="left:462px;top:505px;width:1px;height:366px;background:#a0a0a0"></div>
<div class="t" style="left:513.5px;top:507.14px;font-size:25px;line-height:25px;color:#222;font-weight:700;font-style:normal;">Assets</div>
<div class="r" style="left:475px;top:537px;width:13px;height:13px;background:#e9e7d5;border:1px solid #8f8d78;box-sizing:border-box;border-radius:2px"></div>
<div class="r" style="left:477.5px;top:542.5px;width:8px;height:1.8px;background:#2a2a2a"></div>
<div class="r" style="left:481px;top:550px;width:1px;height:321px;background:#a0a0a0"></div>
<div class="t" style="left:527.5px;top:547.00px;font-size:22.8px;line-height:22.8px;color:#222;font-weight:700;font-style:normal;text-decoration:underline">Current Assets</div>
<div class="r" style="left:494px;top:583px;width:13px;height:13px;background:#e9e7d5;border:1px solid #8f8d78;box-sizing:border-box;border-radius:2px"></div>
<div class="r" style="left:496.5px;top:588.5px;width:8px;height:1.8px;background:#2a2a2a"></div>
<div class="r" style="left:500px;top:596px;width:1px;height:41px;background:#a0a0a0"></div>
<div class="r" style="left:500px;top:637px;width:10px;height:1px;background:#a0a0a0"></div>
<div class="t" style="left:541.5px;top:586.68px;font-size:22.7px;line-height:22.7px;color:#222;font-weight:700;font-style:normal;">Cash and Cash Equivalents</div>
<div class="t" style="left:556px;top:617.46px;font-size:18px;line-height:18px;color:#222;font-weight:400;font-style:normal;">1000 Business Checking</div>
<div class="t" style="left:1388.5px;top:617.46px;font-size:18px;line-height:18px;color:#222;font-weight:400;font-style:normal;">27,417.08</div>
<div class="r" style="left:1235px;top:637.5px;width:235px;height:2px;background:#1a1a1a"></div>
<div class="t" style="left:542px;top:644.48px;font-size:22.7px;line-height:22.7px;color:#222;font-weight:700;font-style:normal;">Total Cash and Cash Equivalents</div>
<div class="t" style="left:1388.5px;top:646.46px;font-size:18px;line-height:18px;color:#222;font-weight:700;font-style:normal;">27,417.08</div>
<div class="r" style="left:494px;top:675px;width:13px;height:13px;background:#e9e7d5;border:1px solid #8f8d78;box-sizing:border-box;border-radius:2px"></div>
<div class="r" style="left:496.5px;top:680.5px;width:8px;height:1.8px;background:#2a2a2a"></div>
<div class="r" style="left:500px;top:688px;width:1px;height:41px;background:#a0a0a0"></div>
<div class="r" style="left:500px;top:729px;width:10px;height:1px;background:#a0a0a0"></div>
<div class="t" style="left:541.5px;top:678.78px;font-size:22.7px;line-height:22.7px;color:#222;font-weight:700;font-style:normal;">Accounts Receivable</div>
<div class="t" style="left:556px;top:709.66px;font-size:18px;line-height:18px;color:#222;font-weight:400;font-style:normal;">1200 Accounts Receivable</div>
<div class="t" style="left:1423.5px;top:709.46px;font-size:18px;line-height:18px;color:#222;font-weight:400;font-style:normal;">81.25</div>
<div class="r" style="left:1235px;top:729.5px;width:235px;height:2px;background:#1a1a1a"></div>
<div class="t" style="left:542px;top:736.78px;font-size:22.7px;line-height:22.7px;color:#222;font-weight:700;font-style:normal;">Total Accounts Receivable</div>
<div class="t" style="left:1423.5px;top:738.56px;font-size:18px;line-height:18px;color:#222;font-weight:700;font-style:normal;">81.25</div>
<div class="t" style="left:541.5px;top:770.48px;font-size:22.7px;line-height:22.7px;color:#222;font-weight:700;font-style:normal;">Inventory</div>
<div class="r" style="left:1235px;top:797.5px;width:235px;height:2px;background:#1a1a1a"></div>
<div class="t" style="left:542px;top:804.78px;font-size:22.7px;line-height:22.7px;color:#222;font-weight:700;font-style:normal;">Total Inventory</div>
<div class="t" style="left:1433.5px;top:806.76px;font-size:18px;line-height:18px;color:#222;font-weight:700;font-style:normal;">0.00</div>
<div class="t" style="left:541.5px;top:838.78px;font-size:22.7px;line-height:22.7px;color:#222;font-weight:700;font-style:normal;">Other Current Assets</div>
<div class="r" style="left:1235px;top:865.5px;width:235px;height:2px;background:#1a1a1a"></div>
</body></html>
